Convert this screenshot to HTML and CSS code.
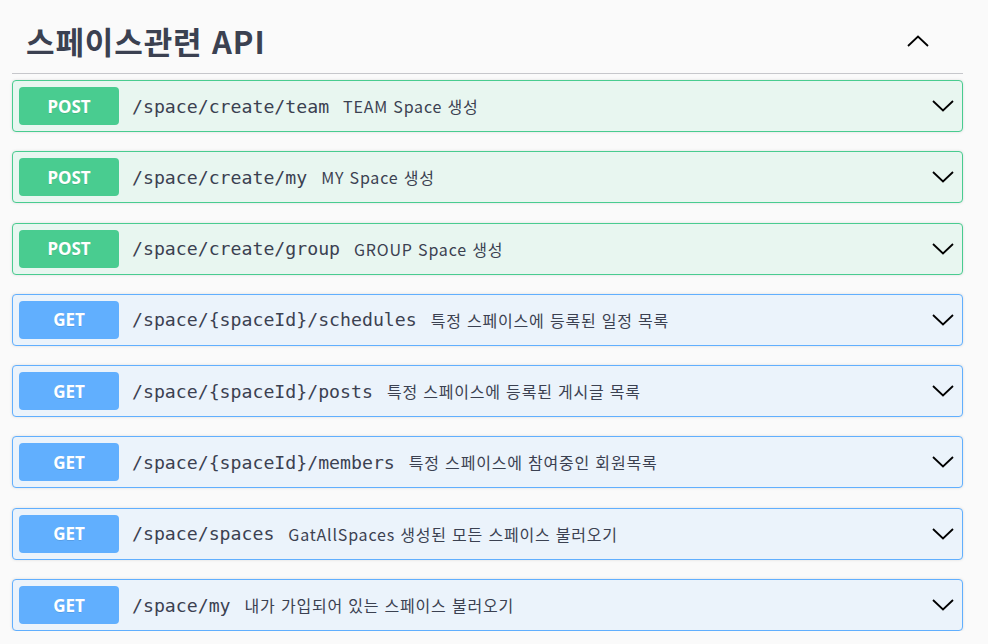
FILE: index.html
```html
<!DOCTYPE html>
<html lang="ko">
<head>
<meta charset="utf-8">
<link rel="stylesheet" href="styles.css">
</head>
<body>
<section class="tag">
  <div class="tag-header">
    <h3 class="tag-title">스페이스관련 API</h3>
    <svg class="arrow" width="22" height="12" viewBox="0 0 22 12"><polyline points="1,11 11,1.5 21,11" fill="none" stroke="#000" stroke-width="1.8"/></svg>
  </div>
  <div class="ops">
    <div class="op post">
      <span class="method">POST</span>
      <span class="path">/space/create/team</span>
      <span class="desc">TEAM Space 생성</span>
      <svg class="arrow" width="22" height="12" viewBox="0 0 22 12"><polyline points="1,1 11,10.5 21,1" fill="none" stroke="#000" stroke-width="1.8"/></svg>
    </div>
    <div class="op post">
      <span class="method">POST</span>
      <span class="path">/space/create/my</span>
      <span class="desc">MY Space 생성</span>
      <svg class="arrow" width="22" height="12" viewBox="0 0 22 12"><polyline points="1,1 11,10.5 21,1" fill="none" stroke="#000" stroke-width="1.8"/></svg>
    </div>
    <div class="op post">
      <span class="method">POST</span>
      <span class="path">/space/create/group</span>
      <span class="desc">GROUP Space 생성</span>
      <svg class="arrow" width="22" height="12" viewBox="0 0 22 12"><polyline points="1,1 11,10.5 21,1" fill="none" stroke="#000" stroke-width="1.8"/></svg>
    </div>
    <div class="op get">
      <span class="method">GET</span>
      <span class="path">/space/{spaceId}/schedules</span>
      <span class="desc">특정 스페이스에 등록된 일정 목록</span>
      <svg class="arrow" width="22" height="12" viewBox="0 0 22 12"><polyline points="1,1 11,10.5 21,1" fill="none" stroke="#000" stroke-width="1.8"/></svg>
    </div>
    <div class="op get">
      <span class="method">GET</span>
      <span class="path">/space/{spaceId}/posts</span>
      <span class="desc">특정 스페이스에 등록된 게시글 목록</span>
      <svg class="arrow" width="22" height="12" viewBox="0 0 22 12"><polyline points="1,1 11,10.5 21,1" fill="none" stroke="#000" stroke-width="1.8"/></svg>
    </div>
    <div class="op get">
      <span class="method">GET</span>
      <span class="path">/space/{spaceId}/members</span>
      <span class="desc">특정 스페이스에 참여중인 회원목록</span>
      <svg class="arrow" width="22" height="12" viewBox="0 0 22 12"><polyline points="1,1 11,10.5 21,1" fill="none" stroke="#000" stroke-width="1.8"/></svg>
    </div>
    <div class="op get">
      <span class="method">GET</span>
      <span class="path">/space/spaces</span>
      <span class="desc">GatAllSpaces 생성된 모든 스페이스 불러오기</span>
      <svg class="arrow" width="22" height="12" viewBox="0 0 22 12"><polyline points="1,1 11,10.5 21,1" fill="none" stroke="#000" stroke-width="1.8"/></svg>
    </div>
    <div class="op get">
      <span class="method">GET</span>
      <span class="path">/space/my</span>
      <span class="desc">내가 가입되어 있는 스페이스 불러오기</span>
      <svg class="arrow" width="22" height="12" viewBox="0 0 22 12"><polyline points="1,1 11,10.5 21,1" fill="none" stroke="#000" stroke-width="1.8"/></svg>
    </div>
  </div>
</section>
</body>
</html>
```

FILE: styles.css
```css
html, body {
  margin: 0;
  padding: 0;
  background: #fafafa;
  color: #3b4151;
  font-family: "Noto Sans", "Noto Sans CJK KR", sans-serif;
}
.tag {
  margin: 0 25px 0 12px;
}
.tag-header {
  display: flex;
  align-items: center;
  height: 74px;
  box-sizing: border-box;
  padding: 0 34px 0 14px;
  border-bottom: 1px solid #c6c7cb;
}
.tag-title {
  flex: 1;
  margin: 0;
  font-family: "Noto Sans CJK KR", sans-serif;
  font-size: 31px;
  font-weight: 700;
  letter-spacing: 0.9px;
  color: #3b4151;
  padding-top: 8px;
}
.tag-header .arrow {
  margin-top: 8px;
}
.ops {
  display: flex;
  flex-direction: column;
  gap: 19.3px;
  padding-top: 6px;
}
.op {
  display: flex;
  align-items: center;
  height: 52px;
  box-sizing: border-box;
  padding: 0 8px 0 6px;
  border: 1px solid;
  border-radius: 4px;
  box-shadow: 0 0 3px rgba(0,0,0,0.12);
}
.op.post {
  background: #e8f6f0;
  border-color: #49cc90;
}
.op.get {
  background: #ebf3fb;
  border-color: #61affe;
}
.method {
  width: 100px;
  height: 38px;
  border-radius: 4px;
  display: flex;
  align-items: center;
  justify-content: center;
  color: #fff;
  font-family: "Noto Sans", sans-serif;
  font-weight: 700;
  font-size: 17px;
  text-shadow: 0 1px 0 rgba(0,0,0,0.1);
}
.post .method { background: #49cc90; }
.get .method { background: #61affe; }
.path {
  margin-left: 13px;
  font-family: "DejaVu Sans Mono", monospace;
  font-size: 18.2px;
  color: #3b4151;
}
.desc {
  flex: 1;
  margin-left: 14px;
  font-family: "Noto Sans CJK KR", sans-serif;
  font-size: 16px;
  letter-spacing: 0.8px;
  color: #3b4151;
}
.op .arrow {
  flex: none;
}
```
